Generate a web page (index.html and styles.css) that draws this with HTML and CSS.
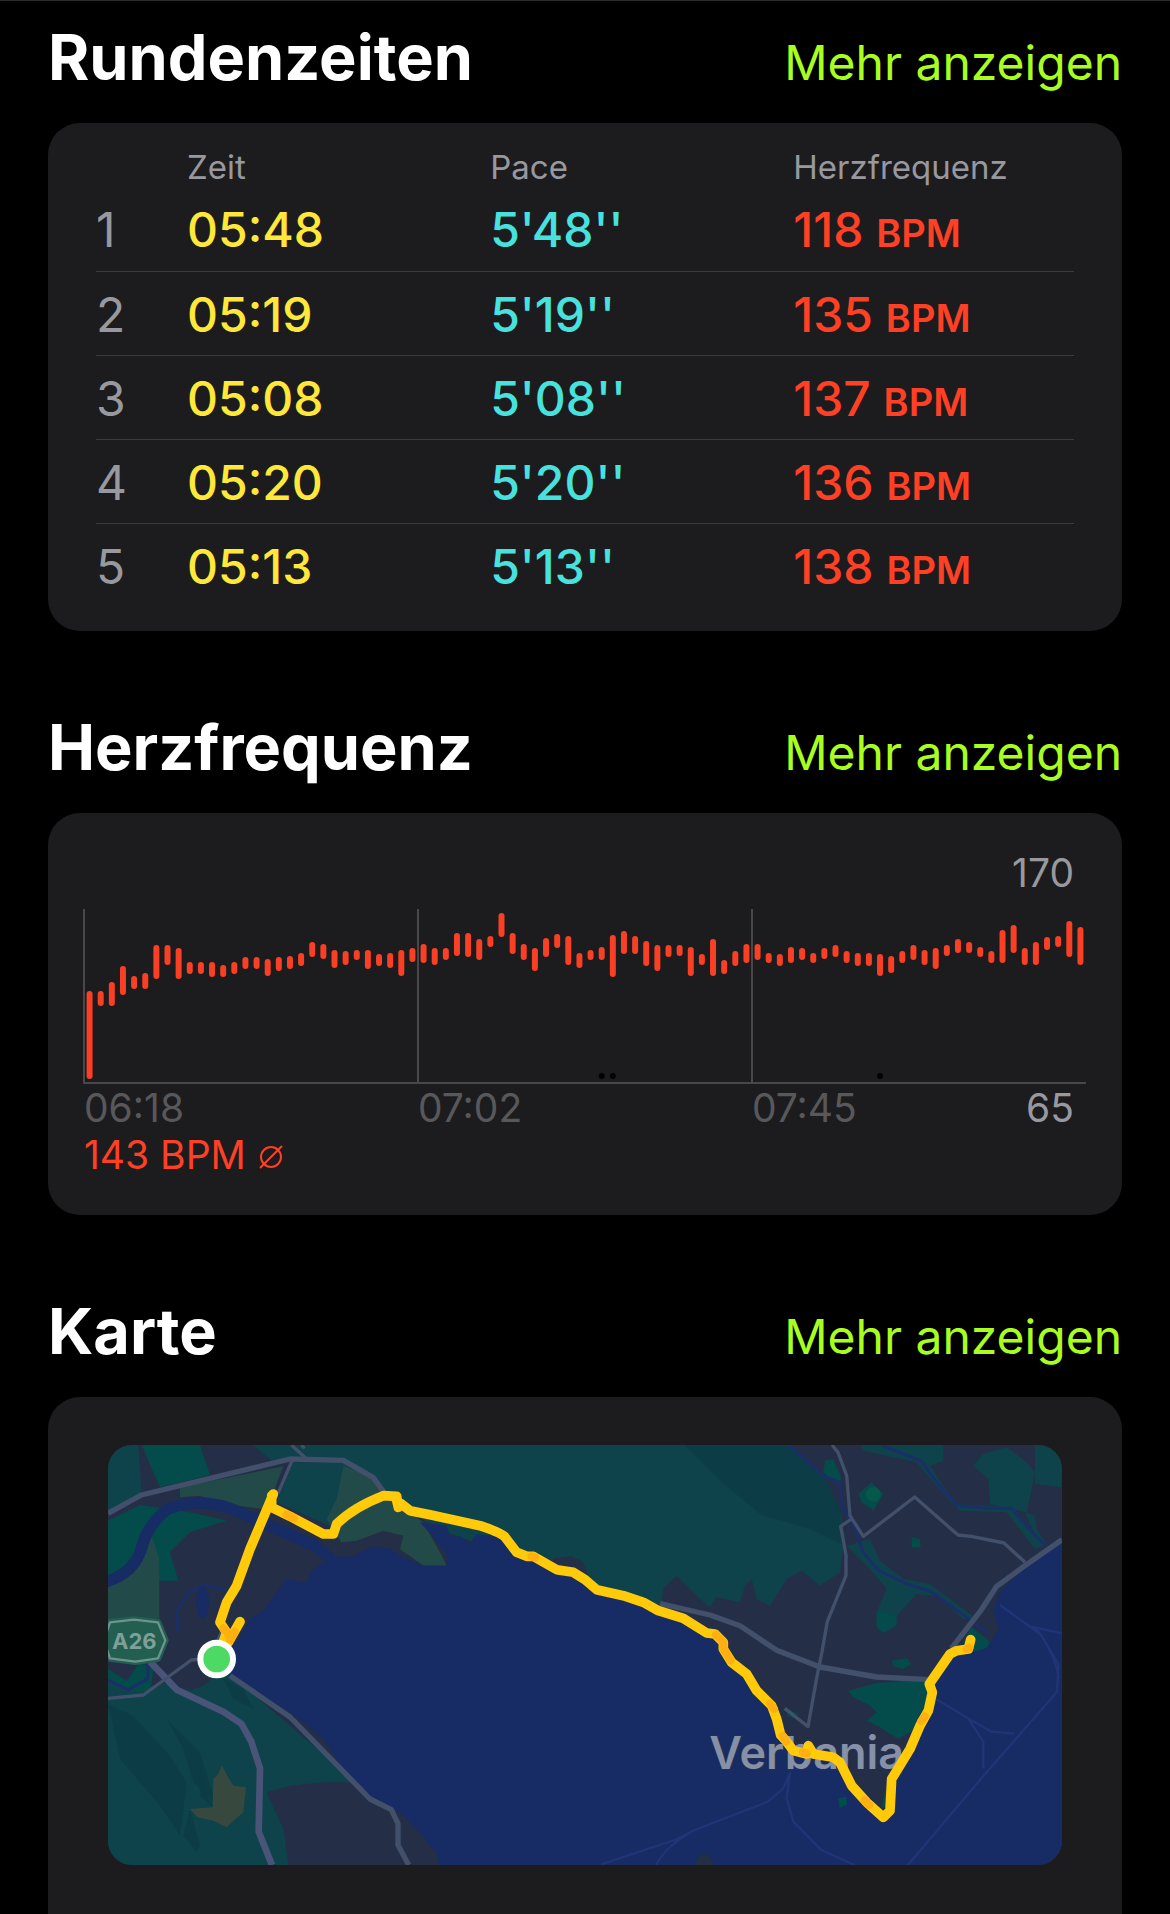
FILE: index.html
```html
<!DOCTYPE html>
<html lang="de">
<head>
<meta charset="utf-8">
<meta name="viewport" content="width=device-width, initial-scale=1">
<title>Training</title>
<link rel="stylesheet" href="styles.css">
</head>
<body>
<main class="workout">
  <section class="section">
    <header class="section-head">
      <h2 class="section-title">Rundenzeiten</h2>
      <a class="more" href="#runden">Mehr anzeigen</a>
    </header>
    <div class="card laps-card" id="runden">
      <table class="laps">
        <colgroup><col class="col-index"><col class="col-value"><col class="col-value"><col></colgroup>
        <thead>
          <tr><td></td><th scope="col">Zeit</th><th scope="col">Pace</th><th scope="col">Herzfrequenz</th></tr>
        </thead>
        <tbody>
          <tr><th scope="row">1</th><td class="time">05:48</td><td class="pace">5'48''</td><td class="heart">118 <small>BPM</small></td></tr>
          <tr><th scope="row">2</th><td class="time">05:19</td><td class="pace">5'19''</td><td class="heart">135 <small>BPM</small></td></tr>
          <tr><th scope="row">3</th><td class="time">05:08</td><td class="pace">5'08''</td><td class="heart">137 <small>BPM</small></td></tr>
          <tr><th scope="row">4</th><td class="time">05:20</td><td class="pace">5'20''</td><td class="heart">136 <small>BPM</small></td></tr>
          <tr><th scope="row">5</th><td class="time">05:13</td><td class="pace">5'13''</td><td class="heart">138 <small>BPM</small></td></tr>
        </tbody>
      </table>
    </div>
  </section>

  <section class="section">
    <header class="section-head">
      <h2 class="section-title">Herzfrequenz</h2>
      <a class="more" href="#puls">Mehr anzeigen</a>
    </header>
    <div class="card chart-card" id="puls">
      <div class="chart-max">170</div>
      <svg class="chart" viewBox="0 0 1002 176" aria-hidden="true">
        <path class="axis" d="M0 0V175M334 0V174M668 0V174M0 174H1002"/>
        <g id="bars"></g>
      </svg>
      <div class="chart-labels">
        <span>06:18</span>
        <span>07:02</span>
        <span class="last"><span>07:45</span><span class="chart-min">65</span></span>
      </div>
      <p class="average">143 BPM <svg class="avg-icon" viewBox="0 0 24 24" aria-label="Durchschnitt"><circle cx="12" cy="12" r="10"/><path d="M1 23L23 1"/></svg></p>
    </div>
  </section>

  <section class="section map-section">
    <header class="section-head">
      <h2 class="section-title">Karte</h2>
      <a class="more" href="#karte">Mehr anzeigen</a>
    </header>
    <div class="card map-card" id="karte">
      <svg class="map" viewBox="0 0 2862 1260" role="img" aria-label="Laufstrecke bei Verbania">
        <rect class="urban" width="2862" height="1260"/>

        <!-- forest and parks, north west -->
        <g transform="translate(-54 -48)">
          <path class="forest" d="M54 48H145L155 190 54 250ZM490 48H900V130L760 90 590 90 545 95ZM610 100H760L800 130 740 300 560 220Z"/>
          <path class="park" d="M155 48H330L360 138 210 175ZM54 275L150 228 230 240 300 250 410 275 300 310 240 370 265 455 180 455 120 440 54 440Z"/>
          <path class="meadow" d="M270 175L580 112 550 190 520 240 400 225 330 200 270 205Z"/>
          <path class="meadow" d="M185 320L208 390V600H54V470L130 430 170 370Z"/>
        </g>
        <!-- forest, south west -->
        <g transform="translate(-54 612)">
          <path class="park" d="M54 60L110 95 150 40 190 60 180 140 54 140Z"/>
          <path class="forest" d="M54 95L120 125 170 130 210 100 300 125 340 110 400 60 800 400 700 400 600 410 530 430 580 540 595 648H54Z"/>
          <path class="shade" d="M54 165L130 200 240 320 290 400 270 560 210 470 90 330ZM230 210L330 310 380 470 310 400 280 300ZM400 90L460 120 490 180 430 150ZM300 480L330 590 320 610 280 560Z"/>
          <path class="shade" d="M325 375L350 440 375 480 330 440Z"/>
          <path class="rock" d="M300 480L368 475 370 390 385 375 395 348 412 380 430 410 468 415 460 490 430 515 410 535 370 515 322 505Z"/>
        </g>
        <!-- mountain forest, north -->
        <path class="forest" d="M716 0H2041L2056 17 2146 92 2196 192 2211 272 2196 382 2136 422 2081 377 2036 402 1986 482 1946 462 1931 402 1911 422 1896 472 1826 457 1806 487 1766 452 1706 392 1666 432 1656 500 1466 450 1430 365 1380 335 1330 345 1226 337 1016 262 880 190 716 60Z"/>
        <path class="shade" d="M1730 0H2041L2150 95 2196 192 2205 300 2100 250 1960 210 1850 120Z"/>
        <path class="urban" d="M1336 340L1390 334 1425 350 1440 400 1380 385Z"/>
        <path class="meadow" d="M706 62L806 102 826 142 886 192 946 232 996 322 1016 362H946L876 312 886 272 826 257 746 287 700 292 656 222 686 162Z"/>
        <!-- parks, north east -->
        <g transform="translate(1866 -48)">
          <path class="forest" d="M390 48H640V95L600 110 640 170 680 225 850 235 940 350 915 360 830 250 690 245 610 160 560 100 400 65ZM730 110L760 75 830 55 885 95 915 130 890 250 780 225 775 150ZM915 48H995V175L915 165ZM885 250L915 260 920 300 950 345 920 330Z"/>
          <path class="forest" d="M350 350L420 330 450 395 520 450 600 465 740 570 700 570 620 500 560 495 500 560 500 590 460 612 440 590 440 550 470 480 420 420Z"/>
          <path class="park" d="M285 95L310 90 335 150 320 165 280 130ZM385 195L425 160 460 195 430 245 395 220ZM545 325L570 330 572 355 545 355ZM440 545L495 560 500 585 460 612 440 595ZM485 695L530 688 545 705 520 720 490 712Z"/>
          <circle class="lawn" cx="430" cy="196" r="22"/>
        </g>
        <!-- parks, Verbania -->
        <g transform="translate(1746 582)">
          <path class="park" d="M475 155L560 132 700 122 730 150 715 215 690 260 625 300 570 265 530 245 560 220 540 200 490 175ZM295 210L325 225 320 240 290 230ZM610 70L640 60 665 75 640 88Z"/>
        </g>

        <path class="water" d="M386 592L426 522 466 497 506 442 536 402 596 412 611 377 646 352 681 357 726 352 746 327 796 304 846 312 886 337 946 362 1016 362 1016 327 976 277 936 232 1016 242 1026 272 1060 275 1086 297 1106 267 1186 277 1226 337 1296 352 1346 382 1406 382 1466 437 1566 462 1646 497 1736 532 1796 567 1831 592 1856 642 1916 687 1951 742 1996 782 2016 852 2031 892 2076 932 2176 942 2216 1002 2286 1082 2326 1122 2346 1082 2356 982 2426 852 2466 772 2491 742 2466 702 2526 627 2596 612 2646 597 2671 552 2656 492 2676 442 2751 362 2862 287V1260H996L946 1172 876 1102 846 1082 786 1052 726 1002 646 882 546 802 446 742 366 692 326 642Z"/>
        <path class="urban" d="M966 1260V1200L990 1230V1260ZM1760 1260L1775 1228 1800 1228 1820 1260Z"/>
        <path class="park" d="M2335 1020L2345 1080 2320 1090ZM2190 1060L2215 1055 2218 1080 2195 1088ZM2590 545L2646 590 2636 608 2600 620 2566 592Z"/>

        <!-- rivers and ferry lines -->
        <path class="river" d="M-10 412Q80 385 100 310T180 192Q290 150 400 204L520 258 620 302 680 352 760 352"/>
        <path class="stream" d="M210 560L206 500 240 445 290 420 370 440M0 705L60 735 120 700V620M2041 0L2146 92 2196 112 2200 180 2236 240 2266 322 2310 375 2400 418 2470 440 2580 520 2640 565M2320 0L2440 48 2486 112 2550 182 2640 190 2710 190 2780 270 2812 300"/>
        <ellipse class="pond" cx="284" cy="472" rx="19" ry="48"/>
        <path class="ferry" d="M1480 1258L1700 1185 1760 1155 1980 1070 2026 1030 2046 985 2036 1060 2056 1130 2140 1215 2240 1260M1645 1260Q1670 1205 1760 1155M2400 1260L2620 1000 2846 742 2852 660 2800 570 2676 480M2480 760L2580 820 2626 890V970M2580 820L2650 860 2720 866M2770 545L2862 565M2780 545Q2840 620 2852 700"/>

        <!-- roads -->
        <path class="road" d="M0 205L100 150 546 42 706 46 796 98 830 145M1656 476L1806 510 1896 542 2006 616 2136 666 2306 696 2466 704M2530 610L2616 500 2666 424 2751 362 2862 284"/>
        <path class="road" d="M366 692L546 816 726 1000 786 1062 850 1094 870 1136 870 1200 902 1260"/>
        <path class="motorway" d="M126 650L206 734 346 800 400 836 430 890 456 970 452 1160 492 1260"/>
        <path class="lane" d="M553 45L510 145M596 42L550 0M590 10L580 0M0 760L106 750 250 645 310 640M2172 0L2190 22 2216 92 2226 212 2266 274 2420 156 2550 270 2590 274 2688 294 2751 352M2230 222L2198 244 2214 330 2214 392 2158 530 2142 620 2126 700 2100 845 2030 790M310 640L340 560"/>

        <!-- motorway shield -->
        <path class="shield-edge" d="M6 532L78 524 150 532 172 586 150 640 82 650 6 640-12 586Z"/>
        <path class="shield" d="M6 532L78 524 150 532 172 586 150 640 82 650 6 640-12 586Z"/>
        <text class="shield-text" x="79" y="612">A26</text>

        <text class="town" x="1804" y="972">Verbania</text>

        <!-- running route -->
        <path class="route" d="M496 147L426 312 386 422 356 472 336 532 356 562 346 590M396 530L361 592M491 152V187L546 214 646 267 676 267 686 237 Q736 187 826 152L866 154 871 187 866 166 906 197 966 209 1116 242 Q1176 262 1190 275L1226 322 1256 334 1276 334 1346 374 1396 382 1431 404 1466 434 1546 452 1606 472 1651 497 1726 520 1796 564 1821 567 1846 592 1846 612 1871 652 1916 687 1946 737 1991 782 2006 822 2018 870 2031 884 2056 917 2096 927 2101 902 2116 927 2176 937 2196 952 2231 1022 2276 1072 2326 1117 2346 1097 2351 1002 2406 912 2436 842 2461 797 2473 742 2464 717 2526 627 2546 617 2581 612 2588 584"/>
        <path class="route slow" d="M535 209L558 220M346 550L360 566M380 560L366 584M1270 334L1282 338M1824 569L1846 592 1846 612 1868 646M1986 776L1998 792M2024 872L2034 890M2084 922L2096 926M2270 1066L2284 1080M2440 828L2450 814M2576 612L2584 608"/>
        <circle class="start" cx="326" cy="642" r="49"/>
      </svg>
    </div>
  </section>
</main>
<script src="chart.js"></script>
</body>
</html>
```
FILE: styles.css
```css
* {
  box-sizing: border-box;
}

body {
  margin: 0;
  background: #000;
  color: #fff;
  font-family: Inter, "Liberation Sans", sans-serif;
}

.workout {
  display: flex;
  flex-direction: column;
  gap: 60px;
  min-height: 100vh;
  padding: 0 48px;
  border-top: 1px solid #2a2a2c;
}

.section-head {
  display: flex;
  align-items: baseline;
  justify-content: space-between;
  padding: 18px 0 28px;
}

.section-title {
  margin: 0;
  font-size: 63px;
  line-height: 76px;
  font-weight: 700;
}

.more {
  color: #a8ff1f;
  font-size: 48px;
  line-height: 60px;
  text-decoration: none;
}

.card {
  background: #1c1c1e;
  border-radius: 32px;
}

/* Lap table */
.laps-card {
  padding: 24px 48px;
}

.laps {
  width: 100%;
  table-layout: fixed;
  border-collapse: collapse;
}

.col-index {
  width: 91px;
}

.col-value {
  width: 31%;
}

.laps th,
.laps td {
  padding: 0;
  text-align: left;
  font-weight: 500;
}

.laps thead th {
  height: 40px;
  color: #98989f;
  font-size: 33px;
  line-height: 40px;
  font-weight: 400;
}

.laps tbody th,
.laps tbody td {
  height: 84px;
  padding-top: 13px;
  font-size: 48px;
  line-height: 60px;
  vertical-align: baseline;
}

.laps tbody th {
  color: #98989f;
  font-weight: 400;
}

.laps tbody tr + tr {
  border-top: 1px solid #3c3c3f;
}

.time {
  color: #ffe83a;
}

.pace {
  color: #48e2de;
}

.heart {
  color: #ff4025;
}

.heart small {
  font-size: 38px;
  line-height: 40px;
  font-weight: 600;
}

/* Heart rate chart */
.chart-card {
  padding: 36px;
}

.chart-max {
  padding-right: 12px;
  color: #98989f;
  font-size: 39px;
  line-height: 48px;
  text-align: right;
}

.chart {
  display: block;
  width: 100%;
  margin-top: 12px;
  overflow: visible;
}

.axis {
  fill: none;
  stroke: #48484a;
  stroke-width: 2;
}

.bar {
  stroke: #f93f24;
  stroke-width: 6;
  stroke-linecap: round;
}

.gap-dot {
  fill: #000;
}

.chart-labels {
  display: grid;
  grid-template-columns: repeat(3, 1fr);
  color: #58585b;
  font-size: 39px;
  line-height: 46px;
}

.last {
  display: flex;
  justify-content: space-between;
}

.chart-min {
  padding-right: 12px;
  color: #98989f;
}

.average {
  margin: 0;
  color: #ff4025;
  font-size: 39px;
  line-height: 48px;
}

.avg-icon {
  width: 24px;
  height: 24px;
  margin-left: 2px;
  fill: none;
  stroke: currentColor;
  stroke-width: 2;
}

/* Map */
.map-section {
  display: flex;
  flex: 1;
  flex-direction: column;
}

.map-card {
  flex: 1;
  padding: 48px 60px;
  border-radius: 32px 32px 0 0;
}

.map {
  display: block;
  width: 100%;
  border-radius: 24px;
}

.urban { fill: #252e47; }
.forest { fill: #0e434b; }
.park { fill: #044b4b; }
.meadow { fill: #224a48; }
.lawn { fill: #06594a; }
.shade { fill: #0b3a44; opacity: 0.6; }
.rock { fill: #37493f; }
.water { fill: #172b64; }

.river,
.stream,
.ferry,
.road,
.motorway,
.lane,
.route {
  fill: none;
  stroke-linejoin: round;
}

.river { stroke: #172b64; stroke-width: 34; }
.stream { stroke: #1a2f68; stroke-width: 9; }
.pond { fill: #172b64; }
.ferry { stroke: #203577; stroke-width: 7; }
.road { stroke: #42506b; stroke-width: 16; }
.motorway { stroke: #4a5478; stroke-width: 20; }
.lane { stroke: #42506b; stroke-width: 10; }

.shield-edge {
  fill: none;
  stroke: #225f50;
  stroke-width: 20;
  stroke-linejoin: round;
}

.shield {
  fill: #225f50;
  stroke: #6d938d;
  stroke-width: 7;
  stroke-linejoin: round;
}

.shield-text {
  fill: #7f9f99;
  font-size: 66px;
  font-weight: 700;
  text-anchor: middle;
}

.town {
  fill: #8690a6;
  stroke: #232f50;
  stroke-width: 6;
  paint-order: stroke;
  font-size: 135px;
  font-weight: 600;
}

.route {
  stroke: #ffca0a;
  stroke-width: 29;
  stroke-linecap: round;
}

.slow {
  stroke: #ffb010;
  stroke-width: 24;
}

.start {
  fill: #4cd964;
  stroke: #fff;
  stroke-width: 18;
}
```
FILE: chart.js
```js
// Heart rate range per interval: [top, bottom] offsets inside the plot.
const ranges = [
  [82,170],[82,97],[73,97],[57,86],[67,80],[64,80],[36,70],[36,56],[39,70],[53,65],
  [53,65],[53,68],[56,68],[53,65],[48,60],[48,60],[50,67],[48,62],[47,60],[44,57],
  [33,48],[35,50],[41,59],[42,56],[41,51],[41,60],[45,57],[44,59],[41,67],[39,53],
  [35,54],[39,56],[39,51],[24,47],[24,48],[30,51],[27,38],[4,28],[24,45],[35,51],
  [39,62],[29,48],[25,39],[27,56],[44,59],[41,51],[38,51],[26,68],[22,45],[27,45],
  [32,57],[36,62],[36,48],[36,47],[38,67],[45,56],[30,67],[51,65],[42,57],[35,54],
  [35,51],[44,54],[45,57],[38,54],[39,51],[44,54],[39,50],[36,48],[42,54],[44,57],
  [44,57],[45,67],[47,64],[42,54],[36,51],[41,56],[39,60],[36,47],[30,44],[33,44],
  [38,48],[42,54],[21,54],[16,44],[39,56],[33,56],[28,41],[27,38],[12,48],[18,56]
];
const gaps = [46, 47, 71];

const ns = "http://www.w3.org/2000/svg";
const plot = document.getElementById("bars");
const step = 1002 / ranges.length;

function add(name, className, attrs) {
  const el = document.createElementNS(ns, name);
  el.setAttribute("class", className);
  for (const key in attrs) el.setAttribute(key, attrs[key]);
  plot.appendChild(el);
}

ranges.forEach(([top, bottom], i) => {
  const x = (i + 0.5) * step;
  add("line", "bar", { x1: x, x2: x, y1: top + 3, y2: bottom - 3 });
});
gaps.forEach((i) => {
  add("circle", "gap-dot", { cx: (i + 0.5) * step, cy: 167, r: 3 });
});
```
